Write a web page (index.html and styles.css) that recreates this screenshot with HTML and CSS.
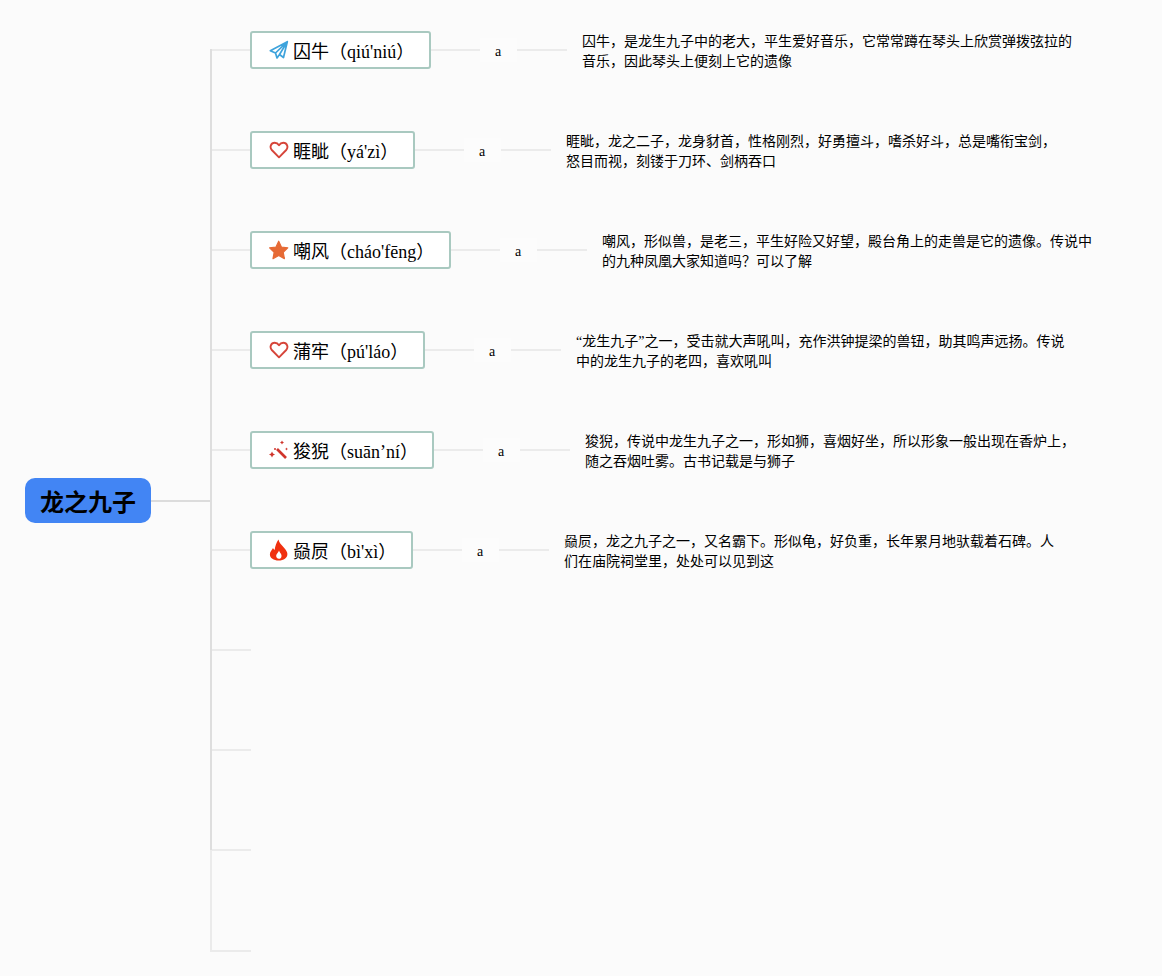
FILE: index.html
```html
<!DOCTYPE html>
<html lang="zh">
<head>
<meta charset="utf-8">
<title>龙之九子</title>
<link rel="stylesheet" href="styles.css">
</head>
<body>
<main class="map">
  <div class="root-side">
    <div class="root">龙之九子</div>
    <div class="root-line"></div>
  </div>
  <div class="branches">
    <div class="row">
      <div class="stub"></div>
      <div class="node">
        <svg class="icon" viewBox="0 0 20 20"><path d="M18.300 1.700 1.300 10.700 6.500 13 8 18l2.500-3.500 4 3zM6.500 13 18.300 1.700 10.500 14.500" fill="none" stroke="#3ea3dc" stroke-width="1.700" stroke-linejoin="round"/></svg>
        <span>囚牛（qiú'niú）</span>
      </div>
      <div class="link"></div><div class="tag">a</div><div class="link link-end"></div>
      <p class="desc">囚牛，是龙生九子中的老大，平生爱好音乐，它常常蹲在琴头上欣赏弹拨弦拉的音乐，因此琴头上便刻上它的遗像</p>
    </div>
    <div class="row">
      <div class="stub"></div>
      <div class="node">
        <svg class="icon" viewBox="0 0 20 20"><path d="M10 17.300 2.800 10C.3 7.300 1.900 2.700 5.700 2.700c2 0 3.300 1 4.300 2.600 1-1.600 2.300-2.600 4.300-2.600 3.800 0 5.400 4.600 2.900 7.300z" fill="none" stroke="#d6453a" stroke-width="1.900" stroke-linejoin="round"/></svg>
        <span>睚眦（yá'zì）</span>
      </div>
      <div class="link"></div><div class="tag">a</div><div class="link link-end"></div>
      <p class="desc">睚眦，龙之二子，龙身豺首，性格刚烈，好勇擅斗，嗜杀好斗，总是嘴衔宝剑，怒目而视，刻镂于刀环、剑柄吞口</p>
    </div>
    <div class="row">
      <div class="stub"></div>
      <div class="node">
        <svg class="icon" viewBox="0 0 20 20"><path d="M9.700 1.200 12.400 7 18.800 7.800 14.200 12.200 15.400 18.600 9.700 15.500 4 18.600 5.200 12.200.6 7.800 7 7z" fill="#e66a35" stroke="#e66a35" stroke-width="1.200" stroke-linejoin="round"/></svg>
        <span>嘲风（cháo'fēng）</span>
      </div>
      <div class="link"></div><div class="tag">a</div><div class="link link-end"></div>
      <p class="desc">嘲风，形似兽，是老三，平生好险又好望，殿台角上的走兽是它的遗像。传说中的九种凤凰大家知道吗？可以了解</p>
    </div>
    <div class="row">
      <div class="stub"></div>
      <div class="node">
        <svg class="icon" viewBox="0 0 20 20"><path d="M10 17.300 2.800 10C.3 7.300 1.900 2.700 5.700 2.700c2 0 3.300 1 4.300 2.600 1-1.600 2.300-2.600 4.300-2.600 3.800 0 5.400 4.600 2.900 7.300z" fill="none" stroke="#d6453a" stroke-width="1.900" stroke-linejoin="round"/></svg>
        <span>蒲牢（pú'láo）</span>
      </div>
      <div class="link"></div><div class="tag">a</div><div class="link link-end"></div>
      <p class="desc">“龙生九子”之一，受击就大声吼叫，充作洪钟提梁的兽钮，助其鸣声远扬。传说中的龙生九子的老四，喜欢吼叫</p>
    </div>
    <div class="row">
      <div class="stub"></div>
      <div class="node node-tight">
        <svg class="icon" viewBox="0 0 20 20"><path d="M8 9 17 18" fill="none" stroke="#d0352c" stroke-width="2.600"/><path d="M13 .5l.7 1.300 1.300.7-1.300.7-.7 1.300-.7-1.300-1.300-.7 1.300-.7zM3 11.500l1 2 2 1-2 1-1 2-1-2-2-1 2-1zM17.500 7.500l.5 1 1 .5-1 .5-.5 1-.5-1-1-.5 1-.5z" fill="#d0352c"/><circle cx="6" cy="9" r="1" fill="#d0352c"/></svg>
        <span>狻猊（suān’ní）</span>
      </div>
      <div class="link"></div><div class="tag">a</div><div class="link link-end"></div>
      <p class="desc">狻猊，传说中龙生九子之一，形如狮，喜烟好坐，所以形象一般出现在香炉上，随之吞烟吐雾。古书记载是与狮子</p>
    </div>
    <div class="row">
      <div class="stub"></div>
      <div class="node">
        <svg class="icon icon-tall" viewBox="0 0 20 22"><path fill-rule="evenodd" d="M9.500.4C10 3.900 12.500 5.400 14.800 8.400 17 10.900 18.400 12.900 18.400 14.900c0 3.900-3.600 6.500-8.700 6.500S.9 18.900.9 15.400C.9 12.400 3 10.900 4 8.900c.6 1 1 1.500 1.700 2C6 7.400 7.500 2.900 9.500.4zM10 11.500C9.700 13.400 7.400 14.600 7.200 16.600 7 18.500 8.200 19.800 9.800 19.800 11.500 19.800 12.700 18.500 12.500 16.400 12.300 14.400 10.400 13.400 10 11.500z" fill="#f0300f"/></svg>
        <span>赑屃（bì'xì）</span>
      </div>
      <div class="link"></div><div class="tag">a</div><div class="link link-end"></div>
      <p class="desc">赑屃，龙之九子之一，又名霸下。形似龟，好负重，长年累月地驮载着石碑。人们在庙院祠堂里，处处可以见到这</p>
    </div>
    <div class="row"><div class="stub"></div></div>
    <div class="row"><div class="stub"></div></div>
    <div class="row"><div class="stub"></div></div>
    <div class="row"><div class="stub"></div></div>
  </div>
</main>
</body>
</html>
```
FILE: styles.css
```css
html, body {
  margin: 0;
  padding: 0;
  background: #fbfbfb;
}
body {
  width: 1162px;
  height: 976px;
  overflow: hidden;
  font-family: "Liberation Serif", "Noto Sans CJK SC", serif;
  color: #000;
}
.map {
  display: flex;
  align-items: flex-start;
  padding-left: 25px;
}
.root-side {
  display: flex;
  align-items: center;
  height: 1000px;
  width: 185px;
  flex: none;
}
.root {
  box-sizing: border-box;
  width: 126px;
  height: 45px;
  line-height: 45px;
  text-align: center;
  flex: none;
  background: #4285f4;
  border-radius: 10px;
  font-size: 24px;
  font-weight: 700;
  font-family: "Noto Sans CJK SC", sans-serif;
}
.root-line {
  flex: 1;
  height: 2px;
  margin-top: 1px;
  background: #dcdcdc;
}
.branches {
  position: relative;
  flex: 1;
}
.branches::before {
  content: "";
  position: absolute;
  left: 0;
  top: 49px;
  width: 2px;
  height: 903px;
  background: linear-gradient(#dedede 0, #dedede 801px, #ebebeb 801px, #ebebeb 100%);
}
.row {
  display: flex;
  align-items: center;
  height: 100px;
}
.row:last-child {
  height: 102px;
}
.stub {
  width: 41px;
  height: 2px;
  margin-right: -1px;
  flex: none;
  background: #ebebeb;
}
.node {
  display: flex;
  align-items: center;
  box-sizing: border-box;
  height: 38px;
  padding: 0 14.8px 0 17px;
  flex: none;
  gap: 4px;
  background: #fff;
  border: 2px solid #a9c9c0;
  border-radius: 3px;
  font-size: 18px;
  white-space: nowrap;
}
.node-tight {
  padding-right: 14px;
}
.icon {
  width: 20px;
  height: 20px;
  flex: none;
}
.icon-tall {
  height: 22px;
}
.link {
  width: 49px;
  height: 2px;
  flex: none;
  background: #ebebeb;
}
.link-end {
  width: 50px;
}
.tag {
  box-sizing: border-box;
  width: 37px;
  flex: none;
  text-align: center;
  font-size: 14px;
  line-height: 20px;
  padding: 4px 1px 0 0;
  background: #fcfcfc;
}
.desc {
  width: 500px;
  margin: 0 0 0 15px;
  padding-top: 4px;
  flex: none;
  font-size: 14px;
  line-height: 20px;
}
```
